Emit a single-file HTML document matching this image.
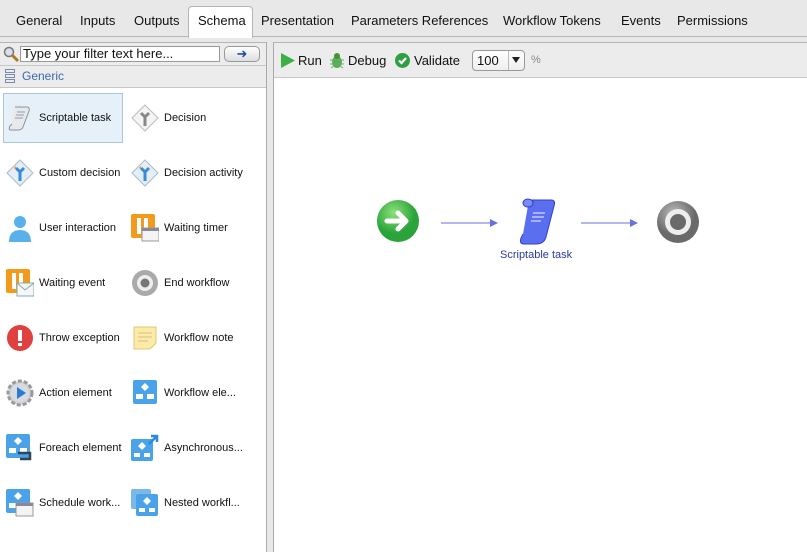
<!DOCTYPE html>
<html><head><style>
*{margin:0;padding:0;box-sizing:border-box}
body{width:807px;height:552px;background:#e8e8e8;font-family:"Liberation Sans",sans-serif;position:relative;overflow:hidden;color:#111}
.a{position:absolute}
.tab{position:absolute;top:13px;font-size:13px;color:#111}
.lbl{position:absolute;font-size:11px;color:#111;white-space:nowrap}
.ic{position:absolute;width:28px;height:28px}
</style></head><body>
<div class="a" style="left:0;top:36px;width:807px;height:1px;background:#b5b5b5"></div>
<div class="a" style="left:188px;top:6px;width:65px;height:32px;background:#fff;border:1px solid #b5b5b5;border-bottom:none;border-radius:4px 4px 0 0"></div>
<div class="tab" style="left:16px">General</div>
<div class="tab" style="left:80px">Inputs</div>
<div class="tab" style="left:134px">Outputs</div>
<div class="tab" style="left:198px">Schema</div>
<div class="tab" style="left:261px">Presentation</div>
<div class="tab" style="left:351px">Parameters References</div>
<div class="tab" style="left:503px">Workflow Tokens</div>
<div class="tab" style="left:621px">Events</div>
<div class="tab" style="left:677px">Permissions</div>

<div class="a" style="left:0;top:42px;width:267px;height:510px;background:#fff;border-right:1px solid #aaa;border-top:1px solid #b5b5b5"></div>
<div class="a" style="left:0;top:43px;width:266px;height:45px;background:#ececec;border-bottom:1px solid #c8c8c8"></div>
<div class="a" style="left:0;top:65px;width:266px;height:1px;background:#c8c8c8"></div>
<svg class="a" style="left:2px;top:45px" width="18" height="18"><circle cx="7" cy="7" r="4.5" fill="#dde" stroke="#777" stroke-width="1.5"/><line x1="10" y1="10" x2="16" y2="16" stroke="#b07a20" stroke-width="3"/></svg>
<div class="a" style="left:20px;top:46px;width:200px;height:16px;background:#fff;border:1px solid #999;font-size:13px;line-height:14px;padding-left:2px">Type your filter text here...</div>
<div class="a" style="left:224px;top:46px;width:36px;height:16px;background:linear-gradient(#fff,#ddd);border:1px solid #999;border-radius:5px;color:#1d4fa5;font-size:13px;line-height:13px;text-align:center">&#10140;</div>
<svg class="a" style="left:5px;top:69px" width="10" height="14"><rect x="0.5" y="0.5" width="9" height="3" fill="none" stroke="#7a8aa8"/><rect x="0.5" y="5.5" width="9" height="3" fill="none" stroke="#7a8aa8"/><rect x="0.5" y="10.5" width="9" height="3" fill="none" stroke="#7a8aa8"/></svg>
<div class="a" style="left:22px;top:69px;font-size:12px;color:#3a6ab0">Generic</div>

<div class="a" style="left:3px;top:93px;width:120px;height:50px;background:#e6f0f8;border:1px solid #a8c8e0"></div>
<svg class="ic" style="left:6px;top:104px" viewBox="0 0 28 28"><path d="M9 3h12q3 0 2 4l-6 16q-1 3-5 3H5q-3 0-1-4l2-2" fill="#e6eaec" stroke="#8a9298"/><path d="M11 8h8M10 11h8M9 14h8" stroke="#99a"/></svg>
<svg class="ic" style="left:6px;top:159px" viewBox="0 0 28 28"><path d="M14 1L27 14L14 27L1 14Z" fill="#e3eef8" stroke="#aabbcc"/><path d="M14 22V13l-4-4M14 13l4-4" stroke="#3a8ad8" stroke-width="3" fill="none"/><path d="M8 9l2-2 0 4z" fill="#f09020"/></svg>
<svg class="ic" style="left:6px;top:214px" viewBox="0 0 28 28"><circle cx="14" cy="8" r="6" fill="#5ab0ea"/><path d="M3 28q0-12 11-12t11 12z" fill="#5ab0ea"/></svg>
<svg class="ic" style="left:6px;top:269px" viewBox="0 0 28 28"><rect x="0" y="0" width="24" height="24" rx="2" fill="#f39a1c"/><rect x="6" y="4" width="4" height="16" fill="#fff"/><rect x="13" y="4" width="4" height="16" fill="#fff"/><rect x="11" y="14" width="17" height="13" fill="#f4f6fa" stroke="#8aa"/><path d="M11 14l8 7 9-7" fill="none" stroke="#8aa"/></svg>
<svg class="ic" style="left:6px;top:324px" viewBox="0 0 28 28"><circle cx="14" cy="14" r="13" fill="#e04040"/><rect x="12" y="6" width="4" height="11" fill="#fff"/><rect x="12" y="19" width="4" height="3" fill="#fff"/></svg>
<svg class="ic" style="left:6px;top:379px" viewBox="0 0 28 28"><circle cx="14" cy="14" r="12" fill="#d0d4d8" stroke="#999" stroke-dasharray="4 2" stroke-width="3"/><circle cx="14" cy="14" r="9" fill="#d8dce0"/><path d="M11 8l9 6-9 6z" fill="#2a7ad8"/></svg>
<svg class="ic" style="left:6px;top:434px" viewBox="0 0 28 28"><rect x="0" y="0" width="24" height="24" rx="2" fill="#4aa3e8"/><path d="M12 3l4 4-4 4-4-4z" fill="#fff"/><rect x="3" y="14" width="7" height="5" fill="#fff"/><rect x="14" y="14" width="7" height="5" fill="#fff"/><path d="M12 19h12v6H14" fill="none" stroke="#345" stroke-width="2.5"/></svg>
<svg class="ic" style="left:6px;top:489px" viewBox="0 0 28 28"><rect x="0" y="0" width="24" height="24" rx="2" fill="#4aa3e8"/><path d="M12 3l4 4-4 4-4-4z" fill="#fff"/><rect x="3" y="14" width="7" height="5" fill="#fff"/><rect x="10" y="14" width="17" height="13" fill="#f4f4f4" stroke="#999"/><rect x="10" y="14" width="17" height="3" fill="#889"/></svg>
<svg class="ic" style="left:131px;top:104px" viewBox="0 0 28 28"><path d="M14 1L27 14L14 27L1 14Z" fill="#f4f4f4" stroke="#bbb"/><path d="M14 22V13l-4-4M14 13l4-4" stroke="#888" stroke-width="3" fill="none"/></svg>
<svg class="ic" style="left:131px;top:159px" viewBox="0 0 28 28"><path d="M14 1L27 14L14 27L1 14Z" fill="#e3eef8" stroke="#aabbcc"/><path d="M14 22V13l-4-4M14 13l4-4" stroke="#3a8ad8" stroke-width="3" fill="none"/><path d="M8 9l2-2 0 4z" fill="#f09020"/></svg>
<svg class="ic" style="left:131px;top:214px" viewBox="0 0 28 28"><rect x="0" y="0" width="24" height="24" rx="2" fill="#f39a1c"/><rect x="6" y="4" width="4" height="16" fill="#fff"/><rect x="13" y="4" width="4" height="16" fill="#fff"/><rect x="11" y="14" width="17" height="13" fill="#f4f4f4" stroke="#999"/><rect x="11" y="14" width="17" height="3" fill="#889"/></svg>
<svg class="ic" style="left:131px;top:269px" viewBox="0 0 28 28"><circle cx="14" cy="14" r="13" fill="#aaa"/><circle cx="14" cy="14" r="8" fill="#eee"/><circle cx="14" cy="14" r="4.5" fill="#777"/></svg>
<svg class="ic" style="left:131px;top:324px" viewBox="0 0 28 28"><path d="M3 3h22v16l-6 6H3z" fill="#fbeaa8" stroke="#e0c870"/><path d="M7 9h14M7 13h14M7 17h10" stroke="#d8c080"/></svg>
<svg class="ic" style="left:131px;top:379px" viewBox="0 0 28 28"><rect x="2" y="1" width="24" height="24" rx="2" fill="#4aa3e8"/><path d="M14 4l4 4-4 4-4-4z" fill="#fff"/><rect x="5" y="15" width="7" height="5" fill="#fff"/><rect x="16" y="15" width="7" height="5" fill="#fff"/></svg>
<svg class="ic" style="left:131px;top:434px" viewBox="0 0 28 28"><rect x="0" y="5" width="22" height="22" rx="2" fill="#4aa3e8"/><path d="M11 8l4 4-4 4-4-4z" fill="#fff"/><rect x="3" y="19" width="6" height="4" fill="#fff"/><rect x="13" y="19" width="6" height="4" fill="#fff"/><path d="M18 10l8-8M20 2h6v6" stroke="#2a8ae0" stroke-width="2.5" fill="none"/></svg>
<svg class="ic" style="left:131px;top:489px" viewBox="0 0 28 28"><rect x="0" y="0" width="20" height="20" rx="2" fill="#7ab8e8"/><rect x="5" y="5" width="22" height="22" rx="2" fill="#4aa3e8"/><path d="M16 8l4 4-4 4-4-4z" fill="#fff"/><rect x="8" y="19" width="6" height="4" fill="#fff"/><rect x="18" y="19" width="6" height="4" fill="#fff"/></svg>

<div class="lbl" style="left:39px;top:112px">Scriptable task</div>
<div class="lbl" style="left:39px;top:167px">Custom decision</div>
<div class="lbl" style="left:39px;top:222px">User interaction</div>
<div class="lbl" style="left:39px;top:277px">Waiting event</div>
<div class="lbl" style="left:39px;top:332px">Throw exception</div>
<div class="lbl" style="left:39px;top:387px">Action element</div>
<div class="lbl" style="left:39px;top:442px">Foreach element</div>
<div class="lbl" style="left:39px;top:497px">Schedule work...</div>
<div class="lbl" style="left:164px;top:112px">Decision</div>
<div class="lbl" style="left:164px;top:167px">Decision activity</div>
<div class="lbl" style="left:164px;top:222px">Waiting timer</div>
<div class="lbl" style="left:164px;top:277px">End workflow</div>
<div class="lbl" style="left:164px;top:332px">Workflow note</div>
<div class="lbl" style="left:164px;top:387px">Workflow ele...</div>
<div class="lbl" style="left:164px;top:442px">Asynchronous...</div>
<div class="lbl" style="left:164px;top:497px">Nested workfl...</div>

<div class="a" style="left:273px;top:42px;width:534px;height:510px;background:#fff;border-left:1px solid #aaa;border-top:1px solid #b5b5b5"></div>
<div class="a" style="left:274px;top:43px;width:533px;height:35px;background:#ececec;border-bottom:1px solid #c8c8c8"></div>
<svg class="a" style="left:281px;top:53px" width="14" height="15"><path d="M0 0L14 7.5L0 15z" fill="#3cb043"/></svg>
<div class="a" style="left:298px;top:53px;font-size:13px">Run</div>
<svg class="a" style="left:329px;top:52px" width="16" height="17"><ellipse cx="8" cy="10" rx="5" ry="6" fill="#5ab048"/><circle cx="8" cy="4" r="3" fill="#4a9038"/><path d="M1 8h14M1 12h14M2 16l3-2M14 16l-3-2" stroke="#6a8" stroke-width="1"/></svg>
<div class="a" style="left:348px;top:53px;font-size:13px">Debug</div>
<svg class="a" style="left:395px;top:53px" width="15" height="15"><circle cx="7.5" cy="7.5" r="7.5" fill="#2ea043"/><path d="M4 7.5l2.5 2.5L11 5" stroke="#fff" stroke-width="2.2" fill="none"/></svg>
<div class="a" style="left:414px;top:53px;font-size:13px">Validate</div>
<div class="a" style="left:472px;top:50px;width:53px;height:21px;background:linear-gradient(#fff,#eee);border:1px solid #999;border-radius:4px"></div>
<div class="a" style="left:508px;top:51px;width:1px;height:19px;background:#bbb"></div>
<div class="a" style="left:477px;top:53px;font-size:13px">100</div>
<svg class="a" style="left:512px;top:57px" width="8" height="6"><path d="M0 0h8L4 6z" fill="#222"/></svg>
<div class="a" style="left:531px;top:54px;font-size:11px;color:#888">%</div>

<svg class="a" style="left:376px;top:199px" width="46" height="46"><defs><radialGradient id="g" cx="40%" cy="30%"><stop offset="0" stop-color="#8ee07a"/><stop offset="1" stop-color="#2aa33a"/></radialGradient></defs><circle cx="22" cy="22" r="21" fill="url(#g)"/><path d="M11 22h18M22 14l8 8-8 8" stroke="#fff" stroke-width="5" fill="none" stroke-linecap="round" stroke-linejoin="round"/></svg>
<svg class="a" style="left:440px;top:217px" width="60" height="12"><line x1="1" y1="6" x2="52" y2="6" stroke="#6a70e0"/><path d="M50 2l8 4-8 4z" fill="#6a70e0"/></svg>
<svg class="a" style="left:580px;top:217px" width="60" height="12"><line x1="1" y1="6" x2="52" y2="6" stroke="#6a70e0"/><path d="M50 2l8 4-8 4z" fill="#6a70e0"/></svg>
<svg class="a" style="left:519px;top:197px" width="38" height="50"><path d="M10 3h22q5 0 3 6L27 40q-2 7-10 7H5q-5 0-3-6l2-4" fill="#5a6ef0" stroke="#3040c8"/><path d="M14 16h12M13 20h12M12 24h10" stroke="#c0c8ff" stroke-width="1.5"/><ellipse cx="9" cy="6" rx="5" ry="4" fill="#7a8cf8" stroke="#3040c8"/></svg>
<div class="a" style="left:500px;top:249px;font-size:11px;color:#2a3aa0">Scriptable task</div>
<svg class="a" style="left:656px;top:200px" width="44" height="44"><defs><radialGradient id="h" cx="40%" cy="30%"><stop offset="0" stop-color="#bbb"/><stop offset="1" stop-color="#6a6a6a"/></radialGradient></defs><circle cx="22" cy="22" r="21" fill="url(#h)"/><circle cx="22" cy="22" r="13" fill="#eee"/><circle cx="22" cy="22" r="8" fill="#6a6a6a"/></svg>
</body></html>
